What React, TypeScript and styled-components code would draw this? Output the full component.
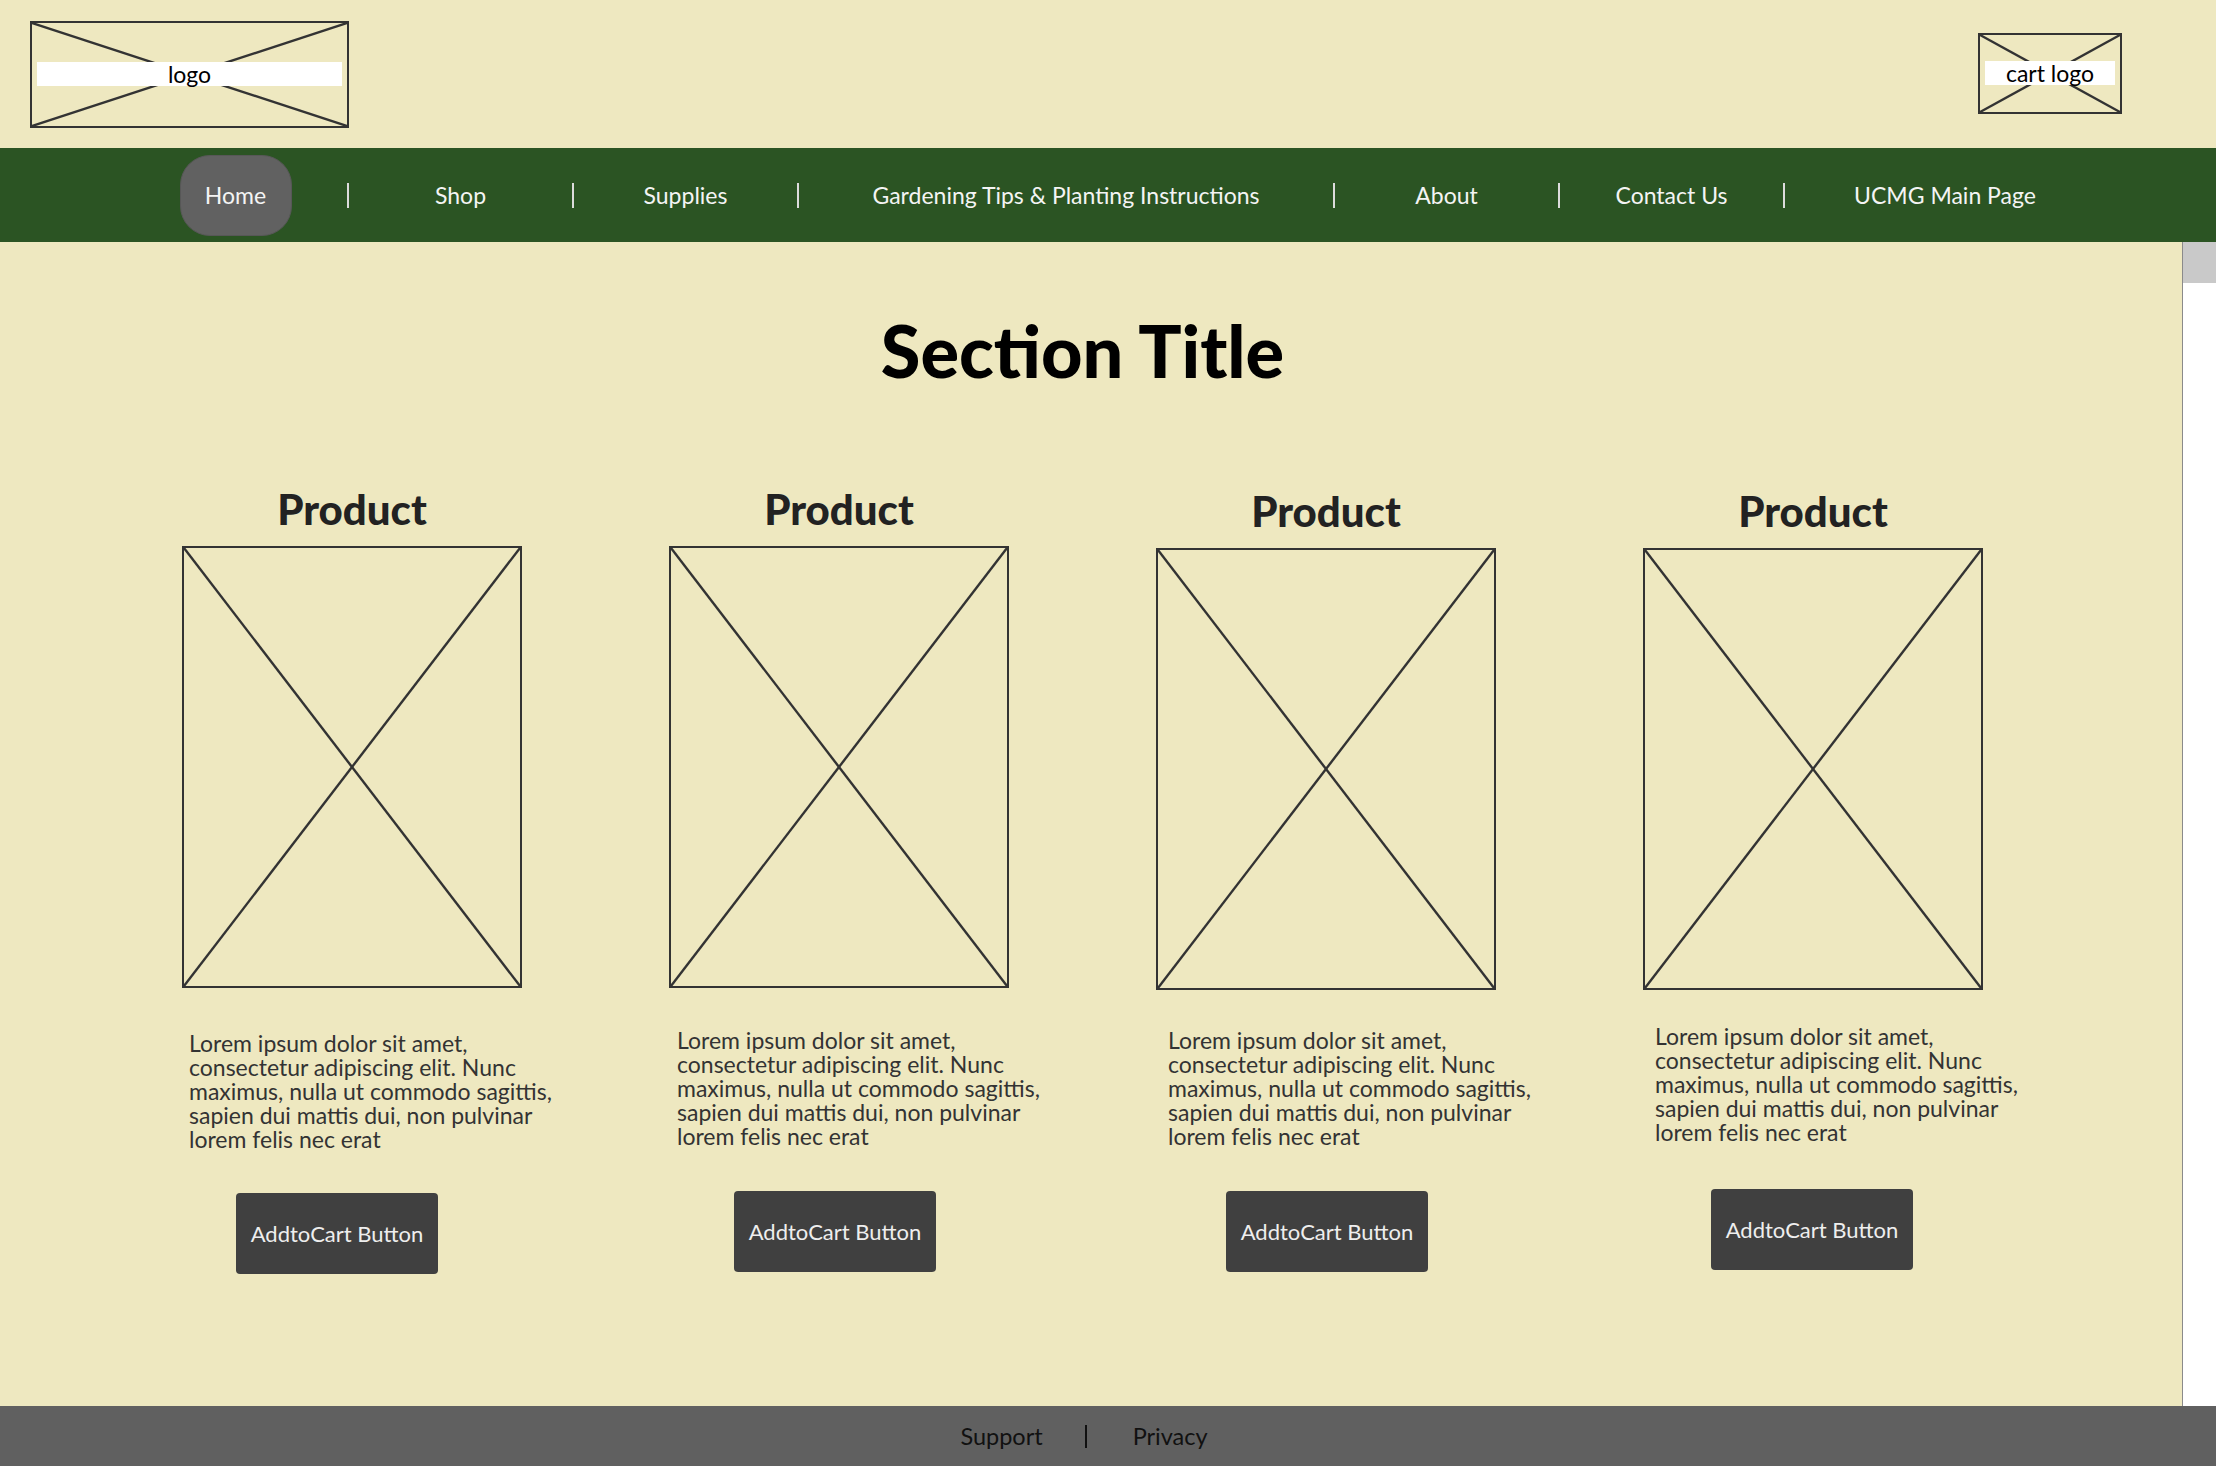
import React from 'react';
import styled, { createGlobalStyle } from 'styled-components';

const GlobalStyle = createGlobalStyle`
  html, body {
    margin: 0;
    padding: 0;
    background: #eee8c0;
    font-family: Lato, "Noto Sans", sans-serif;
    overflow: hidden;
  }
`;

const Page = styled.div`
  width: 2216px;
  height: 1466px;
  display: flex;
  flex-direction: column;
  background: #eee8c0;
`;

const Header = styled.header`
  height: 148px;
  display: flex;
  align-items: center;
  justify-content: space-between;
  padding: 0 94px 0 30px;
`;

const Placeholder = styled.div<{ $w: number; $h: number; $mb?: number }>`
  position: relative;
  width: ${p => p.$w}px;
  height: ${p => p.$h}px;
  margin-bottom: ${p => p.$mb ?? 0}px;
  box-sizing: border-box;
  border: 2px solid #333;
  display: flex;
  align-items: center;
  justify-content: center;
`;

const Cross = styled.svg`
  position: absolute;
  inset: 0;
  width: 100%;
  height: 100%;
`;

const LogoBand = styled.div<{ $inset: number }>`
  position: relative;
  flex: 1;
  margin: 0 ${p => p.$inset}px;
  height: 24px;
  background: #fff;
  display: flex;
  align-items: center;
  justify-content: center;
  font-size: 23px;
  color: #000;
  line-height: 24px;
`;

const Nav = styled.nav`
  height: 94px;
  background: #2b5423;
  display: flex;
  align-items: center;
  padding-left: 124px;
`;

const NavCell = styled.div<{ $w: number }>`
  width: ${p => p.$w}px;
  display: flex;
  justify-content: center;
  align-items: center;
`;

const NavLink = styled.a<{ $active?: boolean }>`
  display: flex;
  align-items: center;
  justify-content: center;
  color: #f4f4f4;
  text-decoration: none;
  font-size: 23px;
  white-space: nowrap;
  ${p => p.$active && `
    width: 112px;
    height: 81px;
    box-sizing: border-box;
    border-radius: 30px;
    background: #616161;
    border: 1px solid #575757;
  `}
`;

const NavSep = styled.span`
  width: 2px;
  height: 25px;
  background: #dcdcdc;
  flex-shrink: 0;
`;

const Main = styled.main`
  flex: 1;
  display: flex;
`;

const Content = styled.div`
  flex: 1;
  padding-left: 182px;
`;

const Inner = styled.div`
  width: 1801px;
`;

const SectionTitle = styled.h1`
  margin: 72px 0 0;
  text-align: center;
  font-size: 72px;
  line-height: 1;
  font-weight: 900;
  color: #000;
`;

const Grid = styled.div`
  display: grid;
  grid-template-columns: repeat(4, 340px);
  column-gap: 147px;
  margin-top: 102px;
`;

const Card = styled.div<{ $dy: number }>`
  display: flex;
  flex-direction: column;
  margin-top: ${p => p.$dy}px;
`;

const ProductTitle = styled.h2`
  margin: 0 0 16px;
  text-align: center;
  font-size: 42px;
  line-height: 1;
  font-weight: 900;
  color: #222;
`;

const Blurb = styled.p<{ $pl: number; $mt: number }>`
  margin: ${p => p.$mt}px 0 0;
  padding-left: ${p => p.$pl}px;
  font-size: 23px;
  line-height: 24px;
  color: #333;
  white-space: nowrap;
`;

const CartButton = styled.button<{ $ml: number; $mt: number }>`
  align-self: flex-start;
  margin: ${p => p.$mt}px 0 0 ${p => p.$ml}px;
  width: 202px;
  height: 81px;
  border: none;
  border-radius: 4px;
  background: #404040;
  color: #eeeeee;
  font-family: Lato, "Noto Sans", sans-serif;
  font-size: 22px;
  cursor: pointer;
`;

const Scrollbar = styled.div`
  width: 33px;
  border-left: 1px solid #8a8a8a;
  background: #ffffff;
`;

const Thumb = styled.div`
  height: 41px;
  background: #c9c9c9;
`;

const Footer = styled.footer`
  height: 60px;
  background: #606060;
  display: flex;
  align-items: center;
  justify-content: center;
  padding-right: 48px;
  gap: 42px;
  color: #111;
  font-size: 23.5px;
`;

const FooterSep = styled.span`
  width: 2px;
  height: 23px;
  background: #111;
  margin-right: 4px;
`;

const X = () => (
  <Cross viewBox="0 0 100 100" preserveAspectRatio="none">
    <line x1="0" y1="0" x2="100" y2="100" stroke="#333" strokeWidth="2.4" vectorEffect="non-scaling-stroke" />
    <line x1="100" y1="0" x2="0" y2="100" stroke="#333" strokeWidth="2.4" vectorEffect="non-scaling-stroke" />
  </Cross>
);

const lorem = [
  'Lorem ipsum dolor sit amet,',
  'consectetur adipiscing elit. Nunc',
  'maximus, nulla ut commodo sagittis,',
  'sapien dui mattis dui, non pulvinar',
  'lorem felis nec erat',
];

const navItems = [
  { label: 'Home', w: 223, active: true },
  { label: 'Shop', w: 223 },
  { label: 'Supplies', w: 223 },
  { label: 'Gardening Tips & Planting Instructions', w: 534 },
  { label: 'About', w: 223 },
  { label: 'Contact Us', w: 223 },
  { label: 'UCMG Main Page', w: 320 },
];

const products = [
  { dy: 0, textPl: 7, textMt: 43, btnMl: 54, btnMt: 42 },
  { dy: 0, textPl: 8, textMt: 40, btnMl: 65, btnMt: 43 },
  { dy: 2, textPl: 12, textMt: 38, btnMl: 70, btnMt: 43 },
  { dy: 2, textPl: 12, textMt: 34, btnMl: 68, btnMt: 45 },
];

const App: React.FC = () => {
  return (
    <>
      <GlobalStyle />
      <Page>
        <Header>
          <Placeholder $w={319} $h={107}>
            <X />
            <LogoBand $inset={5}>logo</LogoBand>
          </Placeholder>
          <Placeholder $w={144} $h={81} $mb={2}>
            <X />
            <LogoBand $inset={5}>cart logo</LogoBand>
          </Placeholder>
        </Header>

        <Nav>
          {navItems.map((item, i) => (
            <React.Fragment key={item.label}>
              {i > 0 && <NavSep />}
              <NavCell $w={item.w}>
                <NavLink $active={item.active}>{item.label}</NavLink>
              </NavCell>
            </React.Fragment>
          ))}
        </Nav>

        <Main>
          <Content>
            <Inner>
              <SectionTitle>Section Title</SectionTitle>
              <Grid>
                {products.map((p, i) => (
                  <Card key={i} $dy={p.dy}>
                    <ProductTitle>Product</ProductTitle>
                    <Placeholder $w={340} $h={442}>
                      <X />
                    </Placeholder>
                    <Blurb $pl={p.textPl} $mt={p.textMt}>
                      {lorem.map((line, j) => (
                        <React.Fragment key={j}>
                          {line}
                          {j < lorem.length - 1 && <br />}
                        </React.Fragment>
                      ))}
                    </Blurb>
                    <CartButton $ml={p.btnMl} $mt={p.btnMt}>AddtoCart Button</CartButton>
                  </Card>
                ))}
              </Grid>
            </Inner>
          </Content>
          <Scrollbar>
            <Thumb />
          </Scrollbar>
        </Main>

        <Footer>
          <span>Support</span>
          <FooterSep />
          <span>Privacy</span>
        </Footer>
      </Page>
    </>
  );
};

export default App;
